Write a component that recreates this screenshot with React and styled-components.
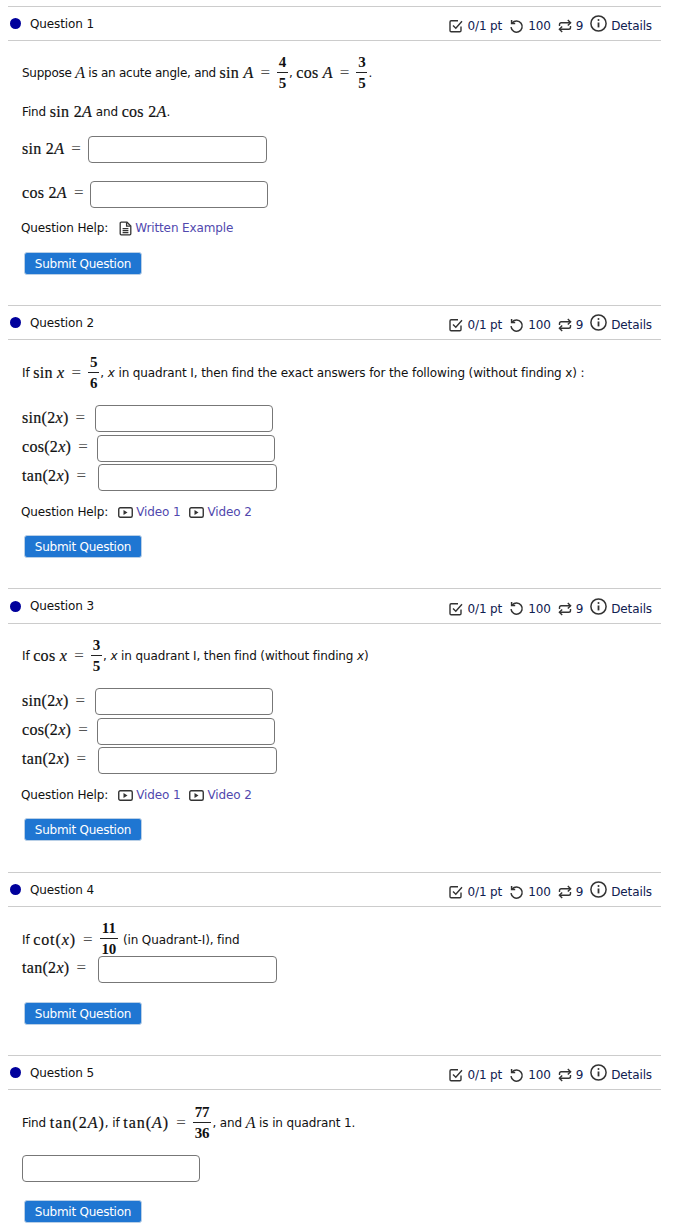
import styled, { createGlobalStyle } from "styled-components";

const GlobalStyle = createGlobalStyle`
    body {
        margin: 0;
        background: white;
        font-family: "DejaVu Sans", "Noto Sans", sans-serif;
        font-size: 12px;
        letter-spacing: -0.12px;
        color: #111;
    }
`
const Page = styled.div`
    padding: 6px 15px 0 8px;
`
const Section = styled.section`
    margin-bottom: ${(p) => p.$gap}px;
`
const Header = styled.div`
    height: ${(p) => p.$height || 33}px;
    display: flex;
    align-items: center;
    justify-content: space-between;
    border-top: 1px solid #ccc;
    border-bottom: 1px solid #ccc;
    padding: 0 9px 0 2px;
`
const Title = styled.div`
    display: flex;
    align-items: center;
    gap: 9px;
`
const Dot = styled.span`
    width: 11px;
    height: 11px;
    border-radius: 50%;
    background: #00009c;
`
const Meta = styled.div`
    display: flex;
    align-items: center;
    color: #102050;
    padding-top: 5px;
    svg {
        color: #333;
    }
`
const MetaItem = styled.span`
    display: flex;
    align-items: center;
    gap: 4px;
    margin-left: 7px;
`
const DetailsIcon = styled.span`
    display: flex;
    margin-top: -5px;
`
const Body = styled.div`
    padding: ${(p) => p.$top}px 0 0 14px;
`
const Row = styled.div`
    display: flex;
    align-items: center;
    white-space: pre;
    height: ${(p) => p.$height || 20}px;
    margin-top: ${(p) => p.$top || 0}px;
    letter-spacing: ${(p) => p.$spacing || "inherit"};
`
// row with a fraction: the words sit a pixel lower than the fraction bar
const FracRow = styled(Row)`
    box-sizing: border-box;
    padding-top: 2px;
`
// row with a label and an input: the label sits a pixel higher than the box
const AnswerRow = styled(Row)`
    > span {
        margin-top: -2px;
    }
`
const Math = styled.span`
    font-family: "Liberation Serif", serif;
    font-size: 16px;
    letter-spacing: ${(p) => p.$spacing || "0.3px"};
    -webkit-text-stroke: 0.2px #111;
`
const Var = styled.i`
    font-family: "Liberation Serif", serif;
    font-size: 16px;
    letter-spacing: inherit;
`
const Eq = styled.span`
    font-family: "Liberation Serif", serif;
    font-size: 17px;
    color: #555;
    margin: 0 7px;
`
const Frac = styled.span`
    display: inline-flex;
    flex-direction: column;
    align-items: center;
    font-family: "Liberation Serif", serif;
    font-weight: bold;
    font-size: 15px;
    line-height: 16px;
    margin: -2px 1px 0 0;
`
const Num = styled.span`
    padding: 0 2px 2px;
    border-bottom: 1px solid #222;
`
const Den = styled.span`
    padding: 2px 2px 0;
`
const AnswerInput = styled.input`
    box-sizing: border-box;
    width: ${(p) => p.$width || 178}px;
    height: ${(p) => p.$height || 27}px;
    border: 1px solid #777;
    border-radius: 4px;
    background: white;
    margin-left: ${(p) => p.$left || 0}px;
`
const Help = styled.div`
    display: flex;
    align-items: center;
    height: 20px;
    margin: ${(p) => p.$top}px 0 0 -1px;
`
const HelpLabel = styled.span`
    margin-right: ${(p) => p.$gap}px;
`
const HelpLink = styled.a`
    display: flex;
    align-items: center;
    gap: 3px;
    margin-right: 9px;
    color: #5148ae;
    text-decoration: none;
    svg {
        color: #333;
    }
`
const SubmitButton = styled.button`
    display: block;
    width: 118px;
    height: 23px;
    margin: ${(p) => p.$top}px 0 0 2px;
    padding: 0;
    background: #1f76d2;
    border: 1px solid #b9cfe6;
    border-radius: 3px;
    color: white;
    font: inherit;
    letter-spacing: -0.25px;
`

const CheckIcon = () => (
    <svg width="14" height="14" viewBox="0 0 14 14" fill="none" stroke="currentColor" strokeWidth="1.4">
        <path d="M12 7.5 V11.5 A1.2 1.2 0 0 1 10.8 12.7 H2.2 A1.2 1.2 0 0 1 1 11.5 V3 A1.2 1.2 0 0 1 2.2 1.8 H9" />
        <path d="M4 6.5 L6.8 9.2 L13 2.2" />
    </svg>
)
const UndoIcon = () => (
    <svg width="15" height="15" viewBox="0 0 15 15" fill="none" stroke="currentColor" strokeWidth="1.5">
        <path d="M3.2 4 A5.6 5.6 0 1 1 2 8.2" />
        <path d="M2.6 1 V4.6 H6.2" />
    </svg>
)
const RetryIcon = () => (
    <svg width="14" height="14" viewBox="0 0 14 14" fill="none" stroke="currentColor" strokeWidth="1.4">
        <path d="M1.5 7 V5.5 A1.8 1.8 0 0 1 3.3 3.7 H12.4" />
        <path d="M9.8 1 L12.6 3.7 L9.8 6.4" />
        <path d="M12.5 7 V8.5 A1.8 1.8 0 0 1 10.7 10.3 H1.6" />
        <path d="M4.2 7.6 L1.4 10.3 L4.2 13" />
    </svg>
)
const InfoIcon = () => (
    <svg width="17" height="17" viewBox="0 0 17 17" fill="none" stroke="currentColor" strokeWidth="1.5">
        <circle cx="8.5" cy="8.5" r="7.6" />
        <path d="M8.5 7.5 V12.4" strokeWidth="1.8" />
        <circle cx="8.5" cy="5" r="1" fill="currentColor" stroke="none" />
    </svg>
)
const DocIcon = () => (
    <svg width="13" height="15" viewBox="0 0 13 15" fill="none" stroke="currentColor" strokeWidth="1.3">
        <path d="M1.2 2.2 A1 1 0 0 1 2.2 1.2 H8 L11.8 5 V12.8 A1 1 0 0 1 10.8 13.8 H2.2 A1 1 0 0 1 1.2 12.8 Z" />
        <path d="M7.6 1.4 V5.2 H11.6 M3.6 7.6 H9.4 M3.6 9.6 H9.4 M3.6 11.6 H9.4" />
    </svg>
)
const VideoIcon = () => (
    <svg width="15" height="11" viewBox="0 0 15 11" fill="none">
        <rect x="0.75" y="0.75" width="13.5" height="9.5" rx="1.5" stroke="currentColor" strokeWidth="1.4" />
        <path d="M5.5 3 L9.5 5.5 L5.5 8 Z" fill="currentColor" />
    </svg>
)

const Question = ({ n, gap, bodyTop, headerHeight, children }) => (
    <Section $gap={gap}>
        <Header $height={headerHeight}>
            <Title>
                <Dot />
                Question {n}
            </Title>
            <Meta>
                <MetaItem><CheckIcon />0/1 pt</MetaItem>
                <MetaItem><UndoIcon />100</MetaItem>
                <MetaItem><RetryIcon />9</MetaItem>
                <MetaItem>
                    <DetailsIcon><InfoIcon /></DetailsIcon>
                    Details
                </MetaItem>
            </Meta>
        </Header>
        <Body $top={bodyTop}>{children}</Body>
    </Section>
)

const VideoHelp = ({ top }) => (
    <Help $top={top}>
        <HelpLabel $gap={10}>Question Help:</HelpLabel>
        <HelpLink href="#"><VideoIcon />Video 1</HelpLink>
        <HelpLink href="#"><VideoIcon />Video 2</HelpLink>
    </Help>
)

const DoubleAngleRows = ({ top }) => (
    <>
        <AnswerRow $height={27} $top={top}><Math>sin(2<Var>x</Var>)</Math><Eq>=</Eq><AnswerInput $width={178} $left={3} /></AnswerRow>
        <AnswerRow $height={28} $top={2}><Math>cos(2<Var>x</Var>)</Math><Eq>=</Eq><AnswerInput $width={178} $left={2} /></AnswerRow>
        <AnswerRow $height={28} $top={1}><Math>tan(2<Var>x</Var>)</Math><Eq>=</Eq><AnswerInput $width={179} $left={5} /></AnswerRow>
    </>
)

const App = () => (
    <Page>
        <GlobalStyle />
        <Question n={1} gap={30} bodyTop={13}>
            <FracRow $height={36} $spacing="-0.25px">
                Suppose <Var>A</Var> is an acute angle, and <Math>sin <Var>A</Var></Math><Eq>=</Eq>
                <Frac><Num>4</Num><Den>5</Den></Frac>, <Math>cos <Var>A</Var></Math><Eq>=</Eq>
                <Frac><Num>3</Num><Den>5</Den></Frac>.
            </FracRow>
            <Row $top={12}>Find <Math>sin 2<Var>A</Var></Math> and <Math>cos 2<Var>A</Var></Math>.</Row>
            <AnswerRow $height={27} $top={14}><Math>sin 2<Var>A</Var></Math><Eq>=</Eq><AnswerInput $width={179} /></AnswerRow>
            <AnswerRow $height={28} $top={17}><Math>cos 2<Var>A</Var></Math><Eq>=</Eq><AnswerInput $width={178} /></AnswerRow>
            <Help $top={10}>
                <HelpLabel $gap={11}>Question Help:</HelpLabel>
                <HelpLink href="#"><DocIcon />Written Example</HelpLink>
            </Help>
            <SubmitButton $top={14}>Submit Question</SubmitButton>
        </Question>
        <Question n={2} gap={30} bodyTop={14}>
            <FracRow $height={36}>
                If <Math>sin <Var>x</Var></Math><Eq>=</Eq><Frac><Num>5</Num><Den>6</Den></Frac>, <em>x</em> in quadrant I, then find the exact answers for the following (without finding x) :
            </FracRow>
            <DoubleAngleRows top={15} />
            <VideoHelp top={11} />
            <SubmitButton $top={13}>Submit Question</SubmitButton>
        </Question>
        <Question n={3} gap={31} bodyTop={13} headerHeight={34}>
            <FracRow $height={36}>
                If <Math>cos <Var>x</Var></Math><Eq>=</Eq><Frac><Num>3</Num><Den>5</Den></Frac>, <em>x</em> in quadrant I, then find (without finding <em>x</em>)
            </FracRow>
            <DoubleAngleRows top={15} />
            <VideoHelp top={11} />
            <SubmitButton $top={13}>Submit Question</SubmitButton>
        </Question>
        <Question n={4} gap={30} bodyTop={14}>
            <FracRow $height={35}>
                If <Math $spacing="0.9px">cot(<Var>x</Var>)</Math><Eq>=</Eq><Frac><Num>11</Num><Den>10</Den></Frac> (in Quadrant-I), find
            </FracRow>
            <AnswerRow $height={28} $top={-1}><Math>tan(2<Var>x</Var>)</Math><Eq>=</Eq><AnswerInput $width={179} $left={5} /></AnswerRow>
            <SubmitButton $top={19}>Submit Question</SubmitButton>
        </Question>
        <Question n={5} gap={0} bodyTop={14}>
            <FracRow $height={36}>
                Find <Math $spacing="1px">tan(2<Var>A</Var>)</Math>, if <Math $spacing="1px">tan(<Var>A</Var>)</Math><Eq>=</Eq><Frac><Num>77</Num><Den>36</Den></Frac>, and <Var>A</Var> is in quadrant 1.
            </FracRow>
            <Row $height={27} $top={15}><AnswerInput $width={178} /></Row>
            <SubmitButton $top={18}>Submit Question</SubmitButton>
        </Question>
    </Page>
)

export default App
